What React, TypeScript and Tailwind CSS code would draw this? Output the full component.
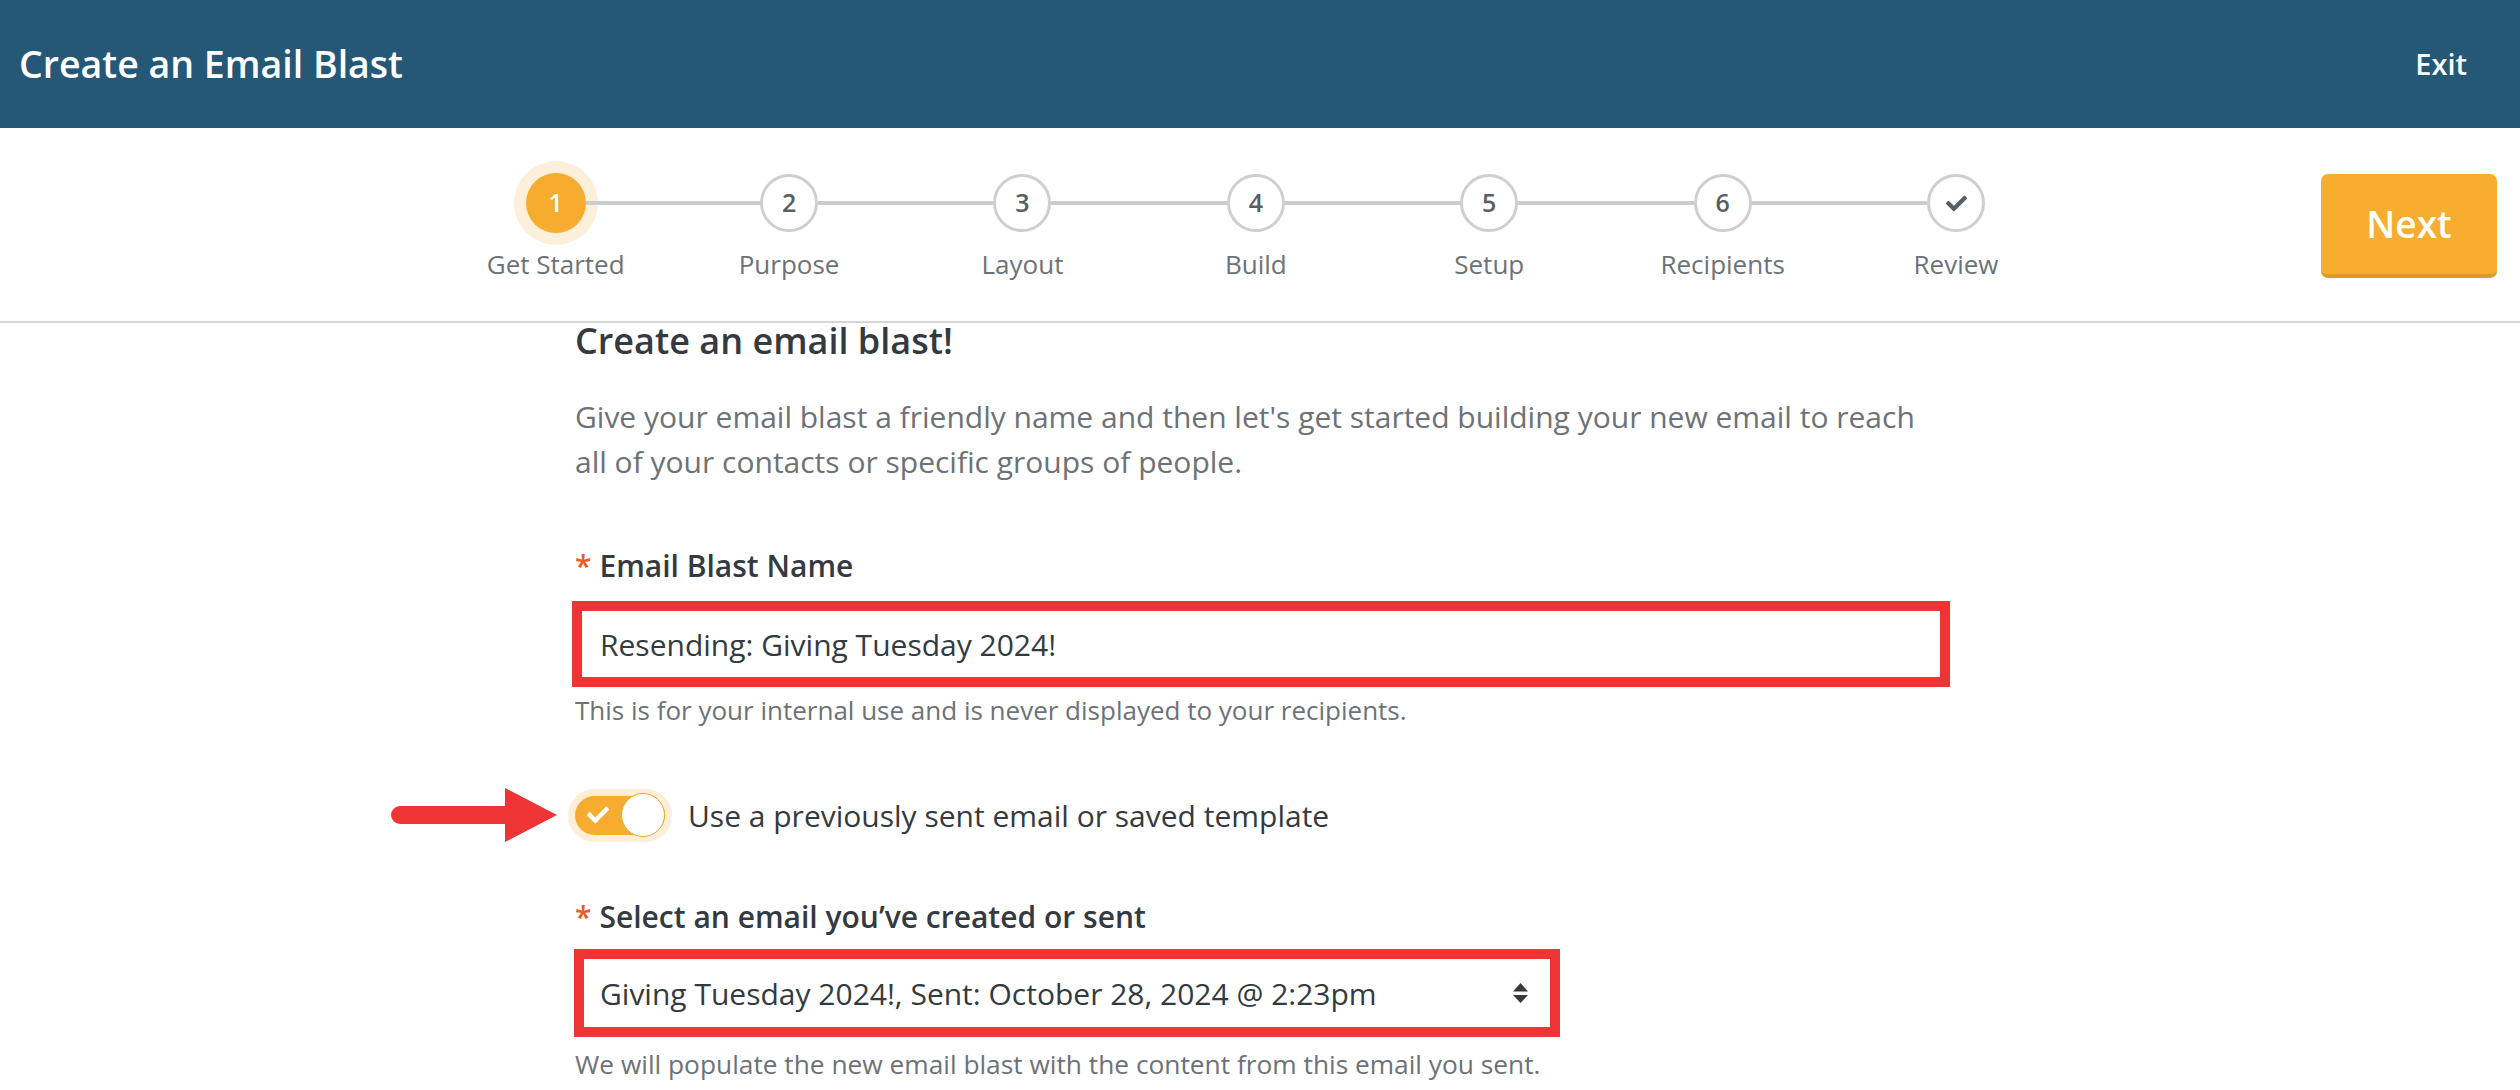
import React from "react";
import { FaCheck } from "react-icons/fa";

const steps = ["Get Started", "Purpose", "Layout", "Build", "Setup", "Recipients", "Review"];

const Step: React.FunctionComponent<{ index: number; label: string }> = ({ index, label }) => {
    const active = index === 0;
    const last = index === steps.length - 1;
    return (
        <div className="w-[233.4px] flex flex-col items-center">
            <div className="w-full h-[84px] flex items-center">
                <div className={index === 0 ? "flex-1 h-[4px]" : "flex-1 h-[4px] bg-[#cccccc]"}></div>
                {active ? (
                    <div className="w-[60px] h-[60px] rounded-full bg-[#f6ad2f] shadow-[0_0_0_12px_#fdf0da] flex items-center justify-center text-white text-[25px] font-semibold">
                        1
                    </div>
                ) : (
                    <div className="w-[58px] h-[58px] rounded-full border-[3px] border-[#cfcfcf] bg-white flex items-center justify-center text-[#575e64] text-[25px] font-semibold">
                        {last ? <FaCheck className="w-[21px] h-[21px]" /> : index + 1}
                    </div>
                )}
                <div className={last ? "flex-1 h-[4px]" : "flex-1 h-[4px] bg-[#cccccc]"}></div>
            </div>
            <span className="text-[26px] leading-[36px] text-[#6c7378] mt-[1px]">{label}</span>
        </div>
    );
};

const Arrow = () => (
    <svg width="166" height="54" viewBox="0 0 166 54" className="absolute right-full mr-[11px] top-1/2 -translate-y-1/2">
        <path d="M9 18 H114 V0 L166 27 L114 54 V36 H9 A9 9 0 0 1 9 18 Z" fill="#ee3434" />
    </svg>
);

export default function App() {
    return (
        <div className="w-[2520px] h-[1090px] overflow-hidden bg-white font-['Open_Sans',sans-serif]">
            <header className="h-[128px] bg-[#255877] flex items-center justify-between pl-[19px] pr-[53px]">
                <h1 className="text-white text-[37.5px] font-semibold">Create an Email Blast</h1>
                <button className="text-white text-[29px] font-semibold">Exit</button>
            </header>

            <div className="h-[195px] border-b-2 border-[#d6d6d6] flex">
                <div className="w-[439px]"></div>
                <div className="flex pt-[33px] self-start">
                    {steps.map((label, index) => <Step key={label} index={index} label={label} />)}
                </div>
                <div className="flex-1 flex justify-end items-center pr-[23px] pt-[2px]">
                    <button className="w-[176px] h-[104px] rounded-[7px] bg-[#f7ad30] border-b-[4px] border-[#dc9a27] text-white text-[37px] font-semibold">
                        Next
                    </button>
                </div>
            </div>

            <div className="w-[1375px] ml-[575px] flex flex-col">
                <h2 className="text-[36px] leading-[36px] font-semibold text-[#343a40]">Create an email blast!</h2>
                <p className="mt-[35px] w-[1355px] text-[30px] leading-[45px] text-[#6c7277]">
                    Give your email blast a friendly name and then let's get started building your new email to reach all of your contacts or specific groups of people.
                </p>

                <label className="mt-[62px] text-[30px] leading-[40px] font-semibold text-[#343a40]">
                    <span className="text-[#ea5b2c] mr-[8px]">*</span>Email Blast Name
                </label>
                <div className="mt-[15px] -ml-[3px] w-[1378px] h-[86px] border-[10px] border-[#ee3434] bg-white flex items-center pl-[18px] text-[30px] text-[#333a40]">
                    Resending: Giving Tuesday 2024!
                </div>
                <span className="mt-[7px] text-[26px] leading-[32px] text-[#6c7277]">
                    This is for your internal use and is never displayed to your recipients.
                </span>

                <div className="mt-[62px] h-[54px] flex items-center">
                    <div className="relative ml-[-7px] p-[7px] rounded-full bg-[#fdefd6] flex items-center">
                        <Arrow />
                        <div className="w-[90px] h-[39px] rounded-full bg-[#f6ad2f] relative flex items-center">
                            <FaCheck className="text-white w-[22px] h-[22px] ml-[12px]" />
                            <div className="absolute right-0 top-1/2 -translate-y-1/2 w-[44px] h-[44px] rounded-full bg-white border-[1.5px] border-[#f0a72a]"></div>
                        </div>
                    </div>
                    <span className="ml-[16px] text-[30px] text-[#343a40]">Use a previously sent email or saved template</span>
                </div>

                <label className="mt-[55px] text-[30px] leading-[40px] font-semibold text-[#343a40]">
                    <span className="text-[#ea5b2c] mr-[8px]">*</span>Select an email you’ve created or sent
                </label>
                <div className="mt-[12px] -ml-[1px] w-[986px] h-[88px] border-[10px] border-[#ee3434] bg-white flex items-center justify-between pl-[16px] pr-[22px] text-[30px] text-[#333a40]">
                    <span>Giving Tuesday 2024!, Sent: October 28, 2024 @ 2:23pm</span>
                    <svg width="15" height="20" viewBox="0 0 15 20">
                        <path d="M7.5 0 L15 8.5 H0 Z" fill="#343a40" />
                        <path d="M0 12 H15 L7.5 20 Z" fill="#343a40" />
                    </svg>
                </div>
                <span className="mt-[11px] text-[26.3px] leading-[32px] text-[#6c7277]">
                    We will populate the new email blast with the content from this email you sent.
                </span>
            </div>
        </div>
    );
}
